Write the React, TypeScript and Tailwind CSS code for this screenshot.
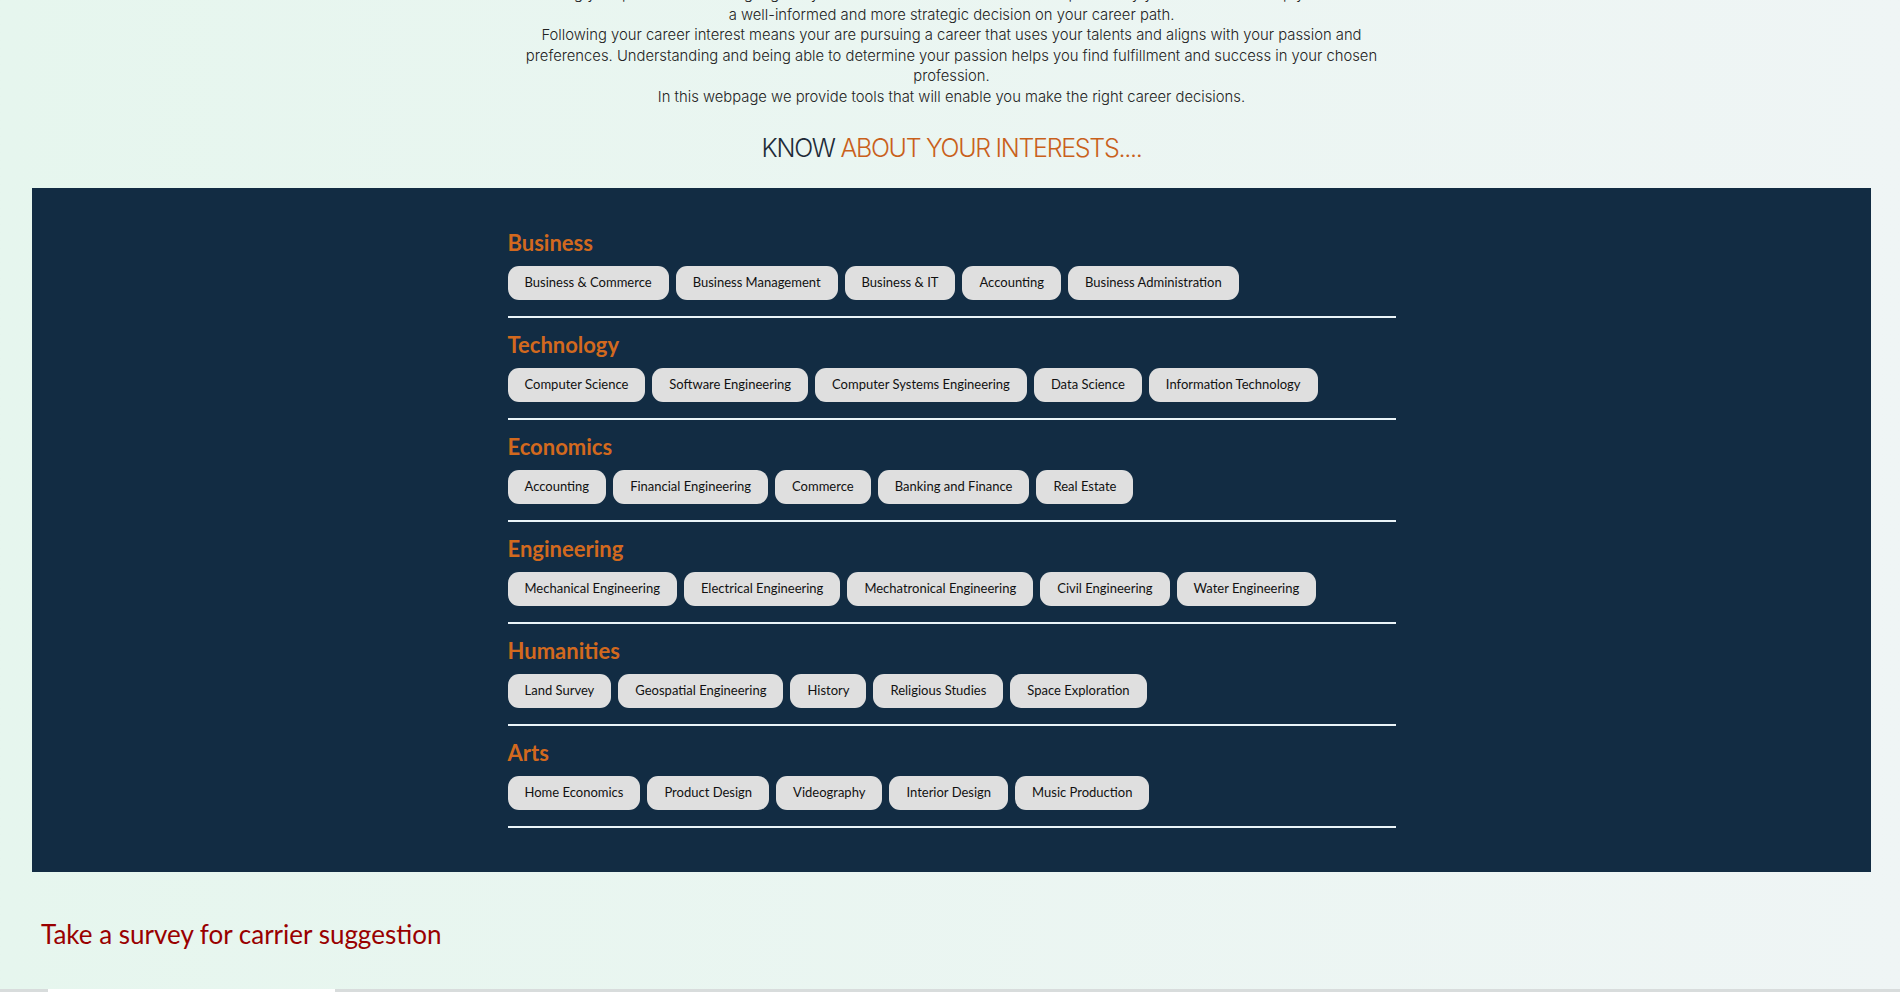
import React from "react";

const categories: { title: string; items: string[] }[] = [
  {
    title: "Business",
    items: [
      "Business & Commerce",
      "Business Management",
      "Business & IT",
      "Accounting",
      "Business Administration",
    ],
  },
  {
    title: "Technology",
    items: [
      "Computer Science",
      "Software Engineering",
      "Computer Systems Engineering",
      "Data Science",
      "Information Technology",
    ],
  },
  {
    title: "Economics",
    items: [
      "Accounting",
      "Financial Engineering",
      "Commerce",
      "Banking and Finance",
      "Real Estate",
    ],
  },
  {
    title: "Engineering",
    items: [
      "Mechanical Engineering",
      "Electrical Engineering",
      "Mechatronical Engineering",
      "Civil Engineering",
      "Water Engineering",
    ],
  },
  {
    title: "Humanities",
    items: [
      "Land Survey",
      "Geospatial Engineering",
      "History",
      "Religious Studies",
      "Space Exploration",
    ],
  },
  {
    title: "Arts",
    items: [
      "Home Economics",
      "Product Design",
      "Videography",
      "Interior Design",
      "Music Production",
    ],
  },
];

const Category = ({ title, items }: { title: string; items: string[] }) => {
  return (
    <div>
      <h3 className="text-[22px] leading-[28px] font-bold text-[#d2691e] font-['Lato',sans-serif]">
        {title}
      </h3>
      <div className="mt-[9px] flex flex-wrap gap-x-[7px]">
        {items.map((item) => (
          <span
            key={item}
            className="h-[34px] px-[17px] flex items-center rounded-[11px] bg-[#dfdfdf] text-[13px] text-[#111] font-['Lato',sans-serif]"
          >
            {item}
          </span>
        ))}
      </div>
      <div className="mt-[16px] h-[2px] bg-[#eaf4f8]" />
    </div>
  );
};

export default function App() {
  return (
    <div className="h-[992px] overflow-hidden bg-gradient-to-r from-[#e6f6ee] to-[#eff5f5] pl-[32px] pr-[29px] flex flex-col">
      {/* Intro text */}
      <div className="-mt-[16px] text-center text-[14.8px] leading-[20.6px] font-light text-[#222] font-['Inter',sans-serif]">
        <p>
          Knowing your passion and strength gives you a clear sense of direction and helps identify your skills which help you to make
          <br />
          a well-informed and more strategic decision on your career path.
        </p>
        <p>
          Following your career interest means your are pursuing a career that uses your talents and aligns with your passion and
          <br />
          preferences. Understanding and being able to determine your passion helps you find fulfillment and success in your chosen
          <br />
          profession.
        </p>
        <p>In this webpage we provide tools that will enable you make the right career decisions.</p>
      </div>

      <h2 className="mt-[22px] text-center text-[25px] leading-[36px] tracking-[-1.3px] font-light font-['Inter',sans-serif] text-[#1e2b38]">
        KNOW <span className="text-[#c9601b]">ABOUT YOUR INTERESTS....</span>
      </h2>

      {/* Interests panel */}
      <section className="mt-[22px] bg-[#122c43] pt-[41px] pb-[44px]">
        <div className="w-[888px] mx-auto flex flex-col gap-[13px]">
          {categories.map((c) => (
            <Category key={c.title} title={c.title} items={c.items} />
          ))}
        </div>
      </section>

      <p className="mt-[45px] pl-[9px] text-[26px] leading-[34px] text-[#990000] font-['Lato',sans-serif]">
        Take a survey for carrier suggestion
      </p>

      <div className="mt-auto h-[3px] bg-[#d8dcdc] -ml-[32px] -mr-[29px] pl-[48px]">
        <div className="w-[287px] h-full bg-white" />
      </div>
    </div>
  );
}
